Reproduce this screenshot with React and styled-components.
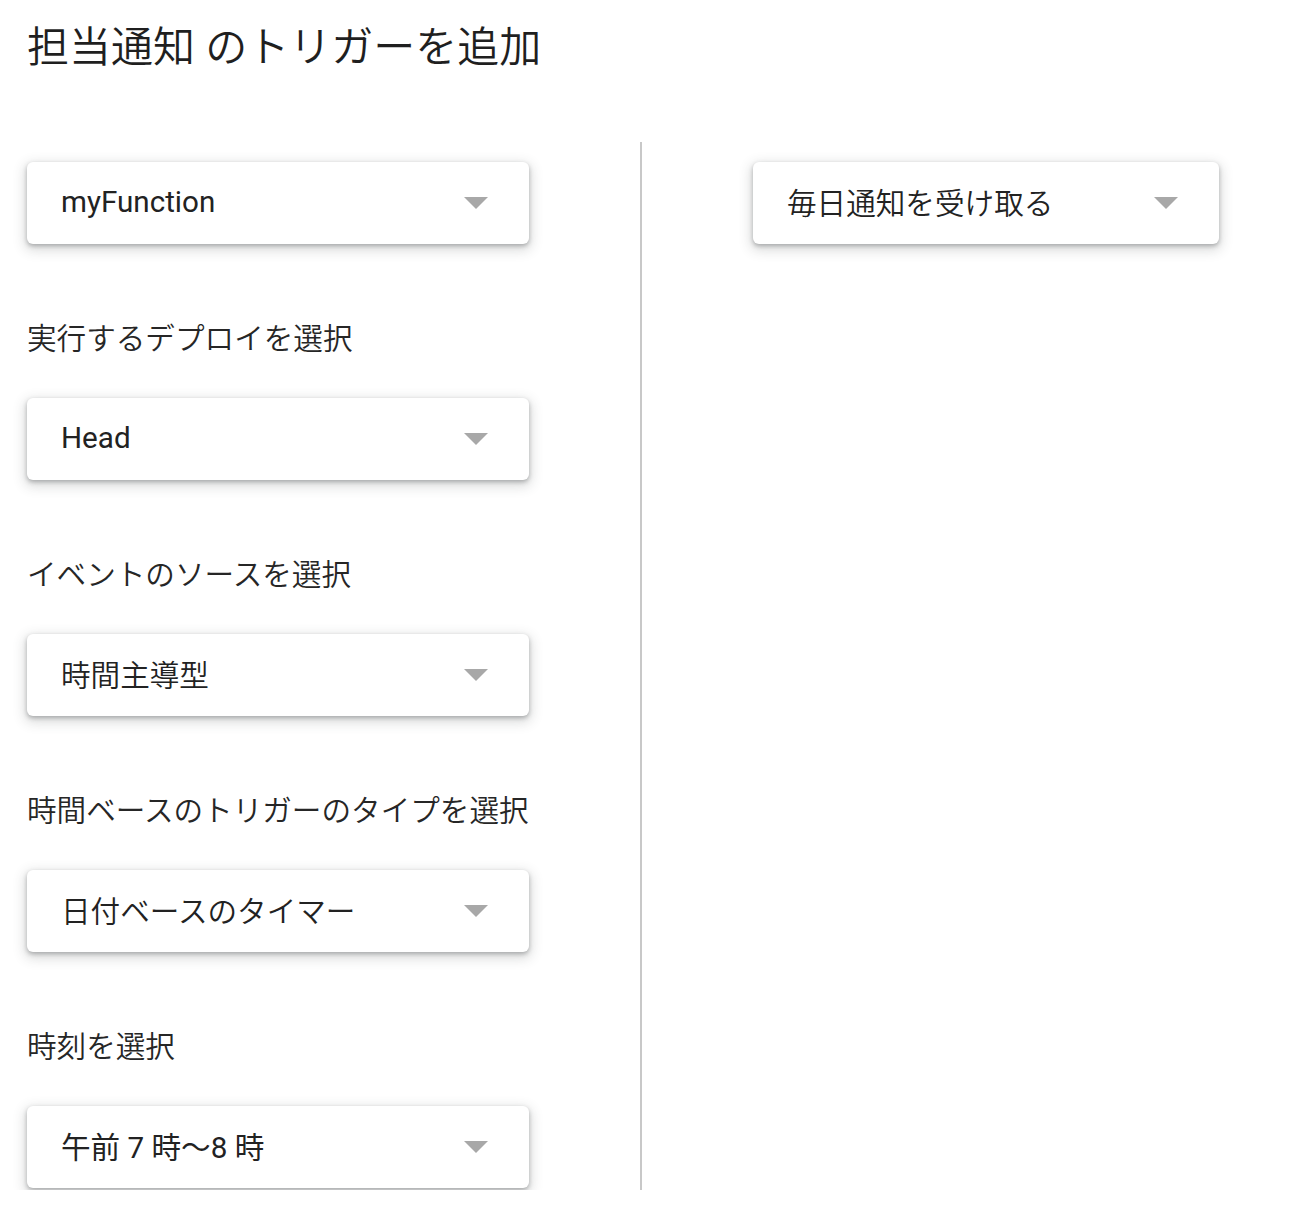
import React from "react";
import styled, { createGlobalStyle } from "styled-components";

const GlobalStyle = createGlobalStyle`
  body {
    margin: 0;
    background: #fff;
  }
`;

const fields = [
  { label: "実行するデプロイを選択", value: "Head" },
  { label: "イベントのソースを選択", value: "時間主導型", cjk: true },
  { label: "時間ベースのトリガーのタイプを選択", value: "日付ベースのタイマー", cjk: true },
  { label: "時刻を選択", value: "午前 7 時〜8 時" },
];

const Select = ({ value, cjk }) => (
  <SelectBox>
    <SelectText $cjk={cjk}>{value}</SelectText>
    <Arrow />
  </SelectBox>
);

const App = () => {
  return (
    <Page>
      <GlobalStyle />
      <Title>担当通知 のトリガーを追加</Title>
      <Columns>
        <LeftCol>
          <Select value="myFunction" />
          {fields.map((f) => (
            <Field key={f.label}>
              <Label>{f.label}</Label>
              <Select value={f.value} cjk={f.cjk} />
            </Field>
          ))}
        </LeftCol>
        <Divider />
        <RightCol>
          <Select value="毎日通知を受け取る" cjk />
        </RightCol>
      </Columns>
    </Page>
  );
};

const Page = styled.div`
  display: flex;
  flex-direction: column;
  height: 1190px;
  overflow: hidden;
  padding-left: 27px;
  box-sizing: border-box;
  font-family: Roboto, "Noto Sans CJK JP", sans-serif;
`;

const Title = styled.h1`
  margin: 0;
  padding-top: 23px;
  font-size: 42px;
  line-height: 50px;
  font-weight: 350;
  color: #1f1f1f;
  white-space: nowrap;
`;

const Columns = styled.div`
  flex: 1;
  min-height: 0;
  margin-top: 69px;
  display: flex;
`;

const LeftCol = styled.div`
  width: 502px;
  flex-shrink: 0;
  padding-top: 20px;
  display: flex;
  flex-direction: column;
`;

const RightCol = styled.div`
  width: 466px;
  flex-shrink: 0;
  padding-top: 20px;
`;

const Divider = styled.div`
  width: 2px;
  flex-shrink: 0;
  margin: 0 111px;
  background: #c8c8c8;
`;

const Field = styled.div`
  display: flex;
  flex-direction: column;
`;

const Label = styled.div`
  margin-top: 75px;
  margin-bottom: 39px;
  font-size: 29.6px;
  line-height: 40px;
  font-weight: 350;
  color: #262626;
  white-space: nowrap;
`;

const SelectBox = styled.div`
  height: 82px;
  flex-shrink: 0;
  box-sizing: border-box;
  display: flex;
  align-items: center;
  justify-content: space-between;
  padding: 0 41px 3px 34px;
  background: #fff;
  border-radius: 6px;
  box-shadow: 0 2px 4px rgba(60, 64, 67, 0.35),
    0 4px 12px 3px rgba(60, 64, 67, 0.17);
`;

const SelectText = styled.span`
  font-size: 29.6px;
  font-weight: ${(p) => (p.$cjk ? 350 : 400)};
  color: #222;
  white-space: nowrap;
`;

const Arrow = styled.span`
  width: 0;
  height: 0;
  margin-top: 3px;
  border-left: 12px solid transparent;
  border-right: 12px solid transparent;
  border-top: 12px solid #a8a8a8;
`;

export default App;
